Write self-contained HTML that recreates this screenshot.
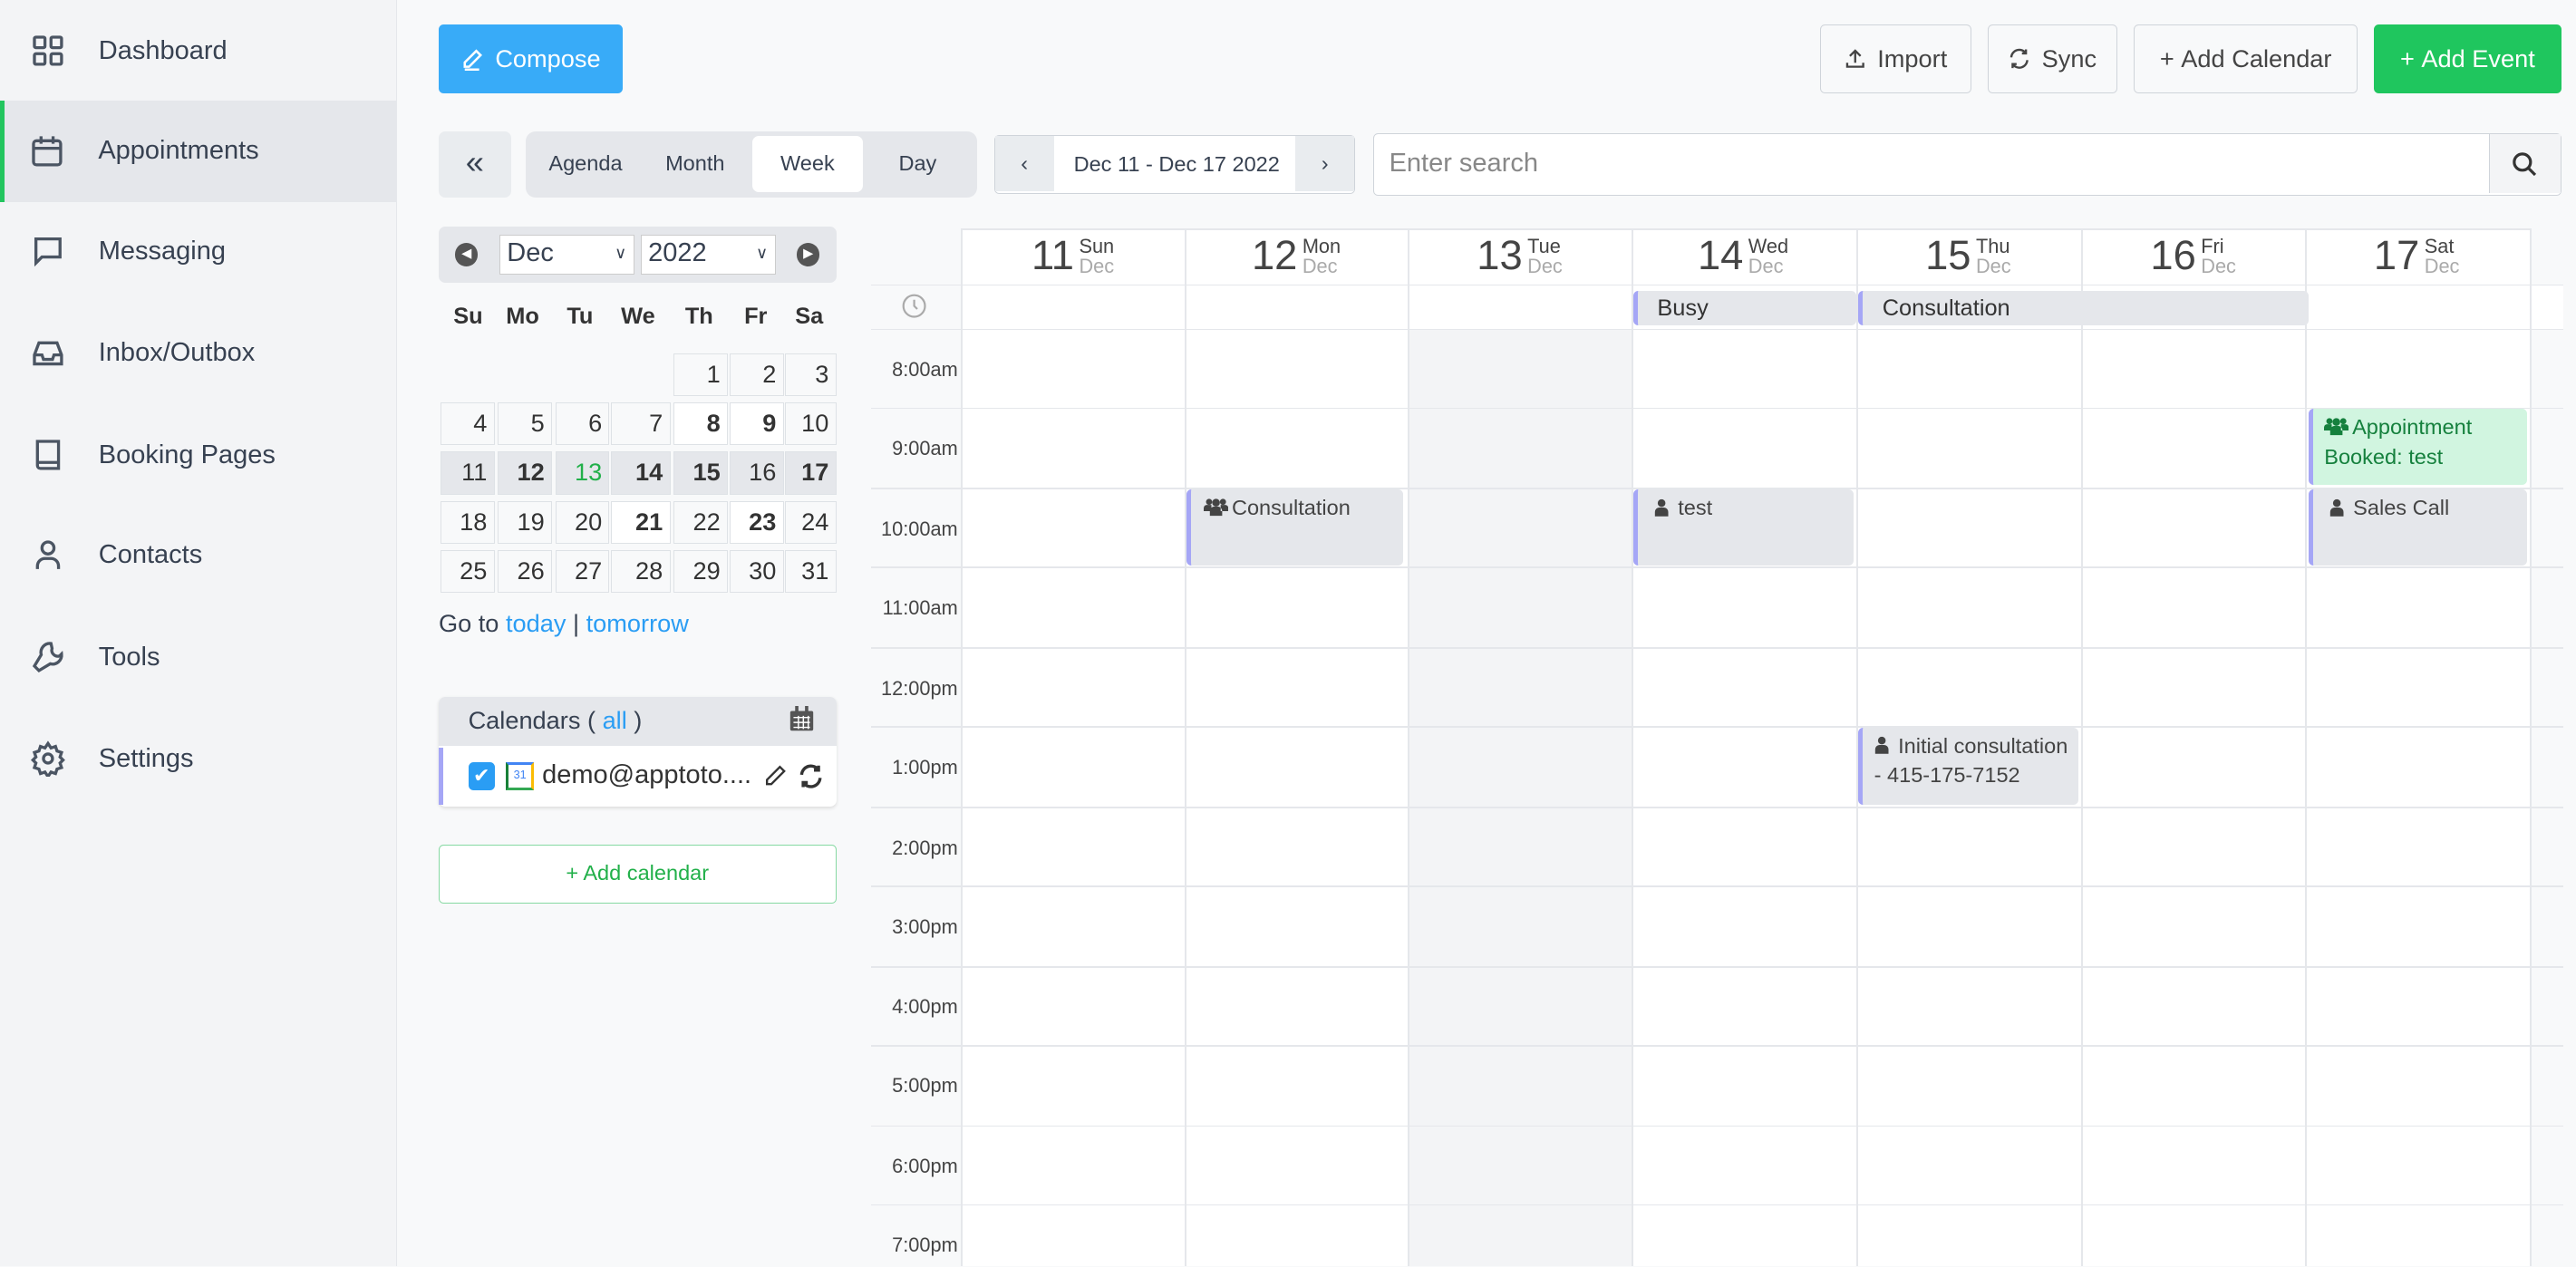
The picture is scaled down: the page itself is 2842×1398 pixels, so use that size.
<!DOCTYPE html>
<html><head><meta charset="utf-8"><style>
html,body{margin:0;padding:0}
body{width:1568px;height:771px;zoom:1.8125;overflow:hidden;background:#f8f9fa;font-family:"Liberation Sans",sans-serif;color:#374151;position:relative}
.a{position:absolute}
#side{left:0;top:0;width:241px;height:771px;background:#f3f4f6;border-right:1px solid #e5e7eb}
.nav{position:absolute;left:0;width:241px;height:62px;display:flex;align-items:center;font-size:16px;color:#374151}
.nav svg{position:absolute;left:18px;width:22px;height:22px}
.nav span{position:absolute;left:60px}
.btn{position:absolute;top:15px;height:42px;border:1px solid #cfd4da;border-radius:3px;background:#f8f9fa;display:flex;align-items:center;justify-content:center;font-size:15px;color:#444;box-sizing:border-box}
.btn svg{margin-right:7px}
.mc{position:absolute;width:33px;height:26px;border:1px solid #dee2e6;box-sizing:border-box;text-align:right;padding-right:4px;line-height:24px;font-size:15px;color:#333;background:#f8f9fa}
.b{font-weight:bold}
.sh{background:#e5e7eb}
.hl{position:absolute;left:530px;width:1030px;height:1px;background:#e5e7eb}
.vl{position:absolute;width:1px;background:#e5e7eb;top:139px;height:632px}
.tm{position:absolute;left:530px;width:53px;text-align:right;font-size:12px;color:#444}
.dh{position:absolute;top:141px;width:136px;text-align:center;color:#444}
.dh b{font-weight:normal;font-size:25px;vertical-align:top}
.dh i{font-style:normal;display:inline-block;font-size:12px;line-height:12px;text-align:left;vertical-align:top;margin-top:3px;margin-left:3px}
.dh i em{font-style:normal;color:#aaa}
.ev{position:absolute;background:#e5e7eb;border-left:3px solid #a5a6f6;border-radius:3px;font-size:13px;color:#333;padding:2px 6px;box-sizing:border-box;overflow:hidden;line-height:18px}
.ev svg{vertical-align:-1px;margin-right:2px}
</style></head><body>
<svg width="0" height="0" style="position:absolute"><defs>
<symbol id="u" viewBox="0 0 10 12"><circle cx="5" cy="3" r="2.6" fill="currentColor"/><path d="M0.5 12v-3a3 3 0 0 1 3-3h3a3 3 0 0 1 3 3v3z" fill="currentColor"/></symbol>
<symbol id="g" viewBox="0 0 16 12"><circle cx="3.5" cy="3" r="2" fill="currentColor"/><circle cx="12.5" cy="3" r="2" fill="currentColor"/><circle cx="8" cy="3.5" r="2.5" fill="currentColor"/><path d="M0 9v-2a2 2 0 0 1 2-2h3v4zM16 9v-2a2 2 0 0 0-2-2h-3v4zM4 12v-3a3 3 0 0 1 3-3h2a3 3 0 0 1 3 3v3z" fill="currentColor"/></symbol>
</defs></svg>
<div id="side" class="a">
 <div class="nav" style="top:0"><svg viewBox="0 0 24 24" fill="none" stroke="#4b5563" stroke-width="2"><rect x="3" y="3" width="7" height="7" rx="1"/><rect x="14" y="3" width="7" height="7" rx="1"/><rect x="3" y="14" width="7" height="7" rx="1"/><rect x="14" y="14" width="7" height="7" rx="1"/></svg><span>Dashboard</span></div>
 <div class="nav" style="top:61px;background:#e5e7eb;border-left:3px solid #22c55e;box-sizing:border-box"><svg viewBox="0 0 24 24" fill="none" stroke="#4b5563" stroke-width="2" style="left:15px"><rect x="3" y="5" width="18" height="16" rx="2"/><path d="M3 10h18M8 2v5M16 2v5"/></svg><span style="left:57px">Appointments</span></div>
 <div class="nav" style="top:122px"><svg viewBox="0 0 24 24" fill="none" stroke="#4b5563" stroke-width="2"><path d="M4 4h16v12H8l-4 4z"/></svg><span>Messaging</span></div>
 <div class="nav" style="top:184px"><svg viewBox="0 0 24 24" fill="none" stroke="#4b5563" stroke-width="2"><path d="M3 13l3-8h12l3 8v6H3zM3 13h5l1 3h6l1-3h5"/></svg><span>Inbox/Outbox</span></div>
 <div class="nav" style="top:246px"><svg viewBox="0 0 24 24" fill="none" stroke="#4b5563" stroke-width="2"><path d="M5 3h14v18H7a2 2 0 0 1-2-2zM5 17h14"/></svg><span>Booking Pages</span></div>
 <div class="nav" style="top:307px"><svg viewBox="0 0 24 24" fill="none" stroke="#4b5563" stroke-width="2"><circle cx="12" cy="7" r="4"/><path d="M5 21v-2a5 5 0 0 1 5-5h4a5 5 0 0 1 5 5v2"/></svg><span>Contacts</span></div>
 <div class="nav" style="top:369px"><svg viewBox="0 0 24 24" fill="none" stroke="#4b5563" stroke-width="2"><path d="M14.7 6.3a4 4 0 0 0 5 5L21 10a6 6 0 0 1-7.5 6.5L6 21l-3-3 4.5-7.5A6 6 0 0 1 14 3z"/></svg><span>Tools</span></div>
 <div class="nav" style="top:431px"><svg viewBox="0 0 24 24" fill="none" stroke="#4b5563" stroke-width="2"><circle cx="12" cy="12" r="3"/><path d="M12 2l2 3 3-1 1 3 3 1-1 3 2 2-2 2 1 3-3 1-1 3-3-1-2 3-2-3-3 1-1-3-3-1 1-3-2-2 2-2-1-3 3-1 1-3 3 1z"/></svg><span>Settings</span></div>
</div>

<div class="btn" style="left:267px;width:112px;background:#38abf8;border:none;color:#fff"><svg width="14" height="14" viewBox="0 0 16 16" fill="none" stroke="#fff" stroke-width="1.6"><path d="M11 2l3 3-8 8H3v-3zM3 15h10"/></svg>Compose</div>
<div class="btn" style="left:1108px;width:92px"><svg width="13" height="13" viewBox="0 0 16 16" fill="none" stroke="#444" stroke-width="1.6"><path d="M8 11V2M4 6l4-4 4 4M2 11v3h12v-3"/></svg>Import</div>
<div class="btn" style="left:1210px;width:79px"><svg width="13" height="13" viewBox="0 0 16 16" fill="none" stroke="#444" stroke-width="1.6"><path d="M2 7a6 6 0 0 1 11-3M14 9a6 6 0 0 1-11 3M13 1v3h-3M3 15v-3h3"/></svg>Sync</div>
<div class="btn" style="left:1299px;width:136px">+&nbsp;Add Calendar</div>
<div class="btn" style="left:1445px;width:114px;background:#1fc65e;border:none;color:#fff">+&nbsp;Add Event</div>

<div class="a" style="left:267px;top:80px;width:44px;height:40px;background:#e9ecef;border-radius:4px;text-align:center;line-height:38px;font-size:20px">«</div>
<div class="a" style="left:320px;top:80px;width:275px;height:40px;background:#e5e7eb;border-radius:6px;font-size:13px">
 <span class="a" style="left:14px;top:12px">Agenda</span><span class="a" style="left:85px;top:12px">Month</span>
 <div class="a" style="left:138px;top:3px;width:67px;height:34px;background:#fff;border-radius:4px;text-align:center;line-height:34px">Week</div>
 <span class="a" style="left:227px;top:12px">Day</span></div>
<div class="a" style="left:605px;top:82px;width:220px;height:36px;border:1px solid #cfd4da;border-radius:3px;background:#fff;box-sizing:border-box;font-size:13px">
 <div class="a" style="left:0;top:0;width:36px;height:34px;background:#e9ecef;text-align:center;line-height:34px">‹</div>
 <span class="a" style="left:48px;top:10px">Dec 11 - Dec 17 2022</span>
 <div class="a" style="right:0;top:0;width:36px;height:34px;background:#e9ecef;text-align:center;line-height:34px">›</div></div>
<div class="a" style="left:836px;top:81px;width:723px;height:38px;border:1px solid #cfd4da;border-radius:3px;background:#fff;box-sizing:border-box">
 <span class="a" style="left:9px;top:9px;font-size:16px;color:#888">Enter search</span>
 <div class="a" style="right:0;top:0;width:43px;height:36px;background:#f3f4f6;border-left:1px solid #cfd4da"><svg class="a" style="left:13px;top:10px" width="17" height="17" viewBox="0 0 24 24" fill="none" stroke="#333" stroke-width="2.5"><circle cx="10" cy="10" r="7"/><path d="M15 15l6 6"/></svg></div></div>

<!-- mini cal -->
<div class="a" style="left:267px;top:138px;width:242px;height:34px;background:#e5e7eb;border-radius:4px">
 <div class="a" style="left:10px;top:10px;width:14px;height:14px;border-radius:50%;background:#555;color:#fff;font-size:8px;text-align:center;line-height:14px">◀</div>
 <div class="a" style="left:37px;top:5px;width:82px;height:24px;background:#fff;border:1px solid #ccc;box-sizing:border-box;font-size:16px;padding-left:4px;line-height:22px">Dec<span style="float:right;font-size:10px;margin-right:4px">∨</span></div>
 <div class="a" style="left:123px;top:5px;width:82px;height:24px;background:#fff;border:1px solid #ccc;box-sizing:border-box;font-size:16px;padding-left:4px;line-height:22px">2022<span style="float:right;font-size:10px;margin-right:4px">∨</span></div>
 <div class="a" style="left:218px;top:10px;width:14px;height:14px;border-radius:50%;background:#555;color:#fff;font-size:8px;text-align:center;line-height:14px">▶</div></div>
<div class="a" style="left:268px;top:185px;font-size:14px;font-weight:bold;color:#333;width:240px">
 <span class="a" style="left:8px">Su</span><span class="a" style="left:40px">Mo</span><span class="a" style="left:77px">Tu</span><span class="a" style="left:110px">We</span><span class="a" style="left:149px">Th</span><span class="a" style="left:185px">Fr</span><span class="a" style="left:216px">Sa</span></div>
<div class="mc" style="left:410px;top:215px">1</div><div class="mc" style="left:444px;top:215px">2</div><div class="mc" style="left:478px;top:215px;width:31px">3</div>
<div class="mc" style="left:268px;top:245px">4</div><div class="mc" style="left:303px;top:245px">5</div><div class="mc" style="left:338px;top:245px">6</div><div class="mc" style="left:372px;top:245px;width:36px">7</div><div class="mc b" style="left:410px;top:245px;background:#fff">8</div><div class="mc b" style="left:444px;top:245px;background:#fff">9</div><div class="mc" style="left:478px;top:245px;width:31px">10</div>
<div class="mc sh" style="left:268px;top:275px">11</div><div class="mc sh b" style="left:303px;top:275px">12</div><div class="mc sh" style="left:338px;top:275px;color:#22b04a">13</div><div class="mc sh b" style="left:372px;top:275px;width:36px">14</div><div class="mc sh b" style="left:410px;top:275px">15</div><div class="mc sh" style="left:444px;top:275px">16</div><div class="mc sh b" style="left:478px;top:275px;width:31px">17</div>
<div class="mc" style="left:268px;top:305px">18</div><div class="mc" style="left:303px;top:305px">19</div><div class="mc" style="left:338px;top:305px">20</div><div class="mc b" style="left:372px;top:305px;width:36px;background:#fff">21</div><div class="mc" style="left:410px;top:305px">22</div><div class="mc b" style="left:444px;top:305px;background:#fff">23</div><div class="mc" style="left:478px;top:305px;width:31px">24</div>
<div class="mc" style="left:268px;top:335px">25</div><div class="mc" style="left:303px;top:335px">26</div><div class="mc" style="left:338px;top:335px">27</div><div class="mc" style="left:372px;top:335px;width:36px">28</div><div class="mc" style="left:410px;top:335px">29</div><div class="mc" style="left:444px;top:335px">30</div><div class="mc" style="left:478px;top:335px;width:31px">31</div>
<div class="a" style="left:267px;top:371px;font-size:15px">Go to <span style="color:#2a9df4">today</span> | <span style="color:#2a9df4">tomorrow</span></div>

<div class="a" style="left:267px;top:424px;width:242px;height:67px;border-radius:4px;background:#fff;box-shadow:0 1px 2px #ddd">
 <div class="a" style="left:0;top:0;width:242px;height:30px;background:#e5e7eb;border-radius:4px 4px 0 0"><span class="a" style="left:18px;top:6px;font-size:15px">Calendars ( <span style="color:#2a9df4">all</span> )</span>
 <svg class="a" style="left:213px;top:6px" width="16" height="16" viewBox="0 0 16 16" fill="#555"><rect x="1" y="3" width="14" height="12" rx="1"/><rect x="4" y="0" width="2" height="4"/><rect x="10" y="0" width="2" height="4"/><path d="M3 7h10M3 10h10M3 13h10M6 6v8M9 6v8M12 6v8" stroke="#fff" stroke-width=".8"/></svg></div>
 <div class="a" style="left:0;top:31px;width:3px;height:35px;background:#a5a6f6"></div>
 <div class="a" style="left:18px;top:40px;width:16px;height:17px;border-radius:3px;background:#2a9df4;color:#fff;font-size:12px;text-align:center;line-height:17px">✔</div>
 <div class="a" style="left:41px;top:40px;width:17px;height:17px;background:#fff;border:2px solid;border-color:#4285f4 #fbbc04 #34a853 #188038;box-sizing:border-box;font-size:7px;color:#4285f4;text-align:center;line-height:13px">31</div>
 <span class="a" style="left:63px;top:39px;font-size:16px;color:#333">demo@apptoto....</span>
 <svg class="a" style="left:198px;top:41px" width="14" height="14" viewBox="0 0 16 16" fill="none" stroke="#333" stroke-width="1.5"><path d="M11 2l3 3-9 9H2v-3z"/></svg>
 <svg class="a" style="left:219px;top:41px" width="15" height="15" viewBox="0 0 16 16" fill="none" stroke="#333" stroke-width="2"><path d="M2 7a6 6 0 0 1 11-3M14 9a6 6 0 0 1-11 3M13 1v3h-3M3 15v-3h3"/></svg></div>
<div class="a" style="left:267px;top:514px;width:242px;height:36px;border:1px solid #86d9a2;border-radius:3px;box-sizing:border-box;background:#fff;text-align:center;line-height:34px;font-size:13px;color:#22b04a">+ Add calendar</div>

<!-- grid -->
<div class="a" style="left:585px;top:139px;width:956px;height:632px;background:#fff"></div>
<div class="a" style="left:585px;top:173px;width:975px;height:27px;background:#fff"></div>
<div class="a" style="left:857px;top:200px;width:136px;height:571px;background:#f3f4f6"></div>
<div class="hl" style="left:585px;top:139px;width:956px"></div>
<div class="hl" style="top:173px"></div><div class="hl" style="top:200px"></div>
<div class="hl" style="top:248px"></div><div class="hl" style="top:297px"></div><div class="hl" style="top:345px"></div><div class="hl" style="top:394px"></div><div class="hl" style="top:442px"></div><div class="hl" style="top:491px"></div><div class="hl" style="top:539px"></div><div class="hl" style="top:588px"></div><div class="hl" style="top:636px"></div><div class="hl" style="top:685px"></div><div class="hl" style="top:733px"></div>
<div class="vl" style="left:585px"></div><div class="vl" style="left:721px"></div><div class="vl" style="left:857px"></div><div class="vl" style="left:993px"></div><div class="vl" style="left:1130px"></div><div class="vl" style="left:1267px"></div><div class="vl" style="left:1403px"></div><div class="vl" style="left:1540px"></div>
<svg class="a" style="left:549px;top:179px" width="15" height="15" viewBox="0 0 16 16" fill="none" stroke="#aaa" stroke-width="1.3"><circle cx="8" cy="8" r="7"/><path d="M8 4v4l2 2"/></svg>
<div class="dh" style="left:585px"><b>11</b><i>Sun<br><em>Dec</em></i></div>
<div class="dh" style="left:721px"><b>12</b><i>Mon<br><em>Dec</em></i></div>
<div class="dh" style="left:857px"><b>13</b><i>Tue<br><em>Dec</em></i></div>
<div class="dh" style="left:993px"><b>14</b><i>Wed<br><em>Dec</em></i></div>
<div class="dh" style="left:1130px"><b>15</b><i>Thu<br><em>Dec</em></i></div>
<div class="dh" style="left:1267px"><b>16</b><i>Fri<br><em>Dec</em></i></div>
<div class="dh" style="left:1403px"><b>17</b><i>Sat<br><em>Dec</em></i></div>
<div class="tm" style="top:218px">8:00am</div><div class="tm" style="top:266px">9:00am</div><div class="tm" style="top:315px">10:00am</div><div class="tm" style="top:363px">11:00am</div><div class="tm" style="top:412px">12:00pm</div><div class="tm" style="top:460px">1:00pm</div><div class="tm" style="top:509px">2:00pm</div><div class="tm" style="top:557px">3:00pm</div><div class="tm" style="top:606px">4:00pm</div><div class="tm" style="top:654px">5:00pm</div><div class="tm" style="top:703px">6:00pm</div><div class="tm" style="top:751px">7:00pm</div>

<div class="ev" style="left:994px;top:177px;width:136px;height:21px;font-size:14px;padding-left:12px">Busy</div>
<div class="ev" style="left:1131px;top:177px;width:274px;height:21px;font-size:14px;padding-left:12px">Consultation</div>
<div class="ev" style="left:722px;top:298px;width:132px;height:46px;padding-left:8px;color:#444"><svg width="15" height="12"><use href="#g"/></svg>Consultation</div>
<div class="ev" style="left:994px;top:298px;width:134px;height:46px;padding-left:10px;color:#444"><svg width="9" height="11"><use href="#u"/></svg> test</div>
<div class="ev" style="left:1405px;top:249px;width:133px;height:46px;background:#d1f5e0;color:#15803d;padding-left:7px"><svg width="15" height="12"><use href="#g"/></svg>Appointment Booked: test</div>
<div class="ev" style="left:1405px;top:298px;width:133px;height:46px;padding-left:10px;color:#444"><svg width="9" height="11"><use href="#u"/></svg> Sales Call</div>
<div class="ev" style="left:1131px;top:443px;width:134px;height:47px;padding-left:7px;color:#444"><svg width="9" height="11"><use href="#u"/></svg> Initial consultation - 415-175-7152</div>
</body></html>
